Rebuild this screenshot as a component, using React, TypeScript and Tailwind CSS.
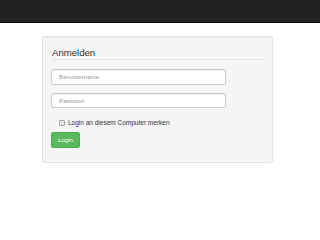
export default function App() {
  const font = { fontFamily: '"Liberation Sans", Arial, sans-serif' };
  return (
    <div className="w-[320px] h-[240px] bg-white overflow-hidden" style={font}>
      <div className="h-[23px] bg-[#222222] border-b border-[#080808]" />
      <div className="ml-[42px] mt-[13px] w-[231px] h-[127px] bg-[#f5f5f5] border border-[#e3e3e3] rounded-[2px] shadow-[inset_0_1px_1px_rgba(0,0,0,0.05)] pt-[10px] px-[8px] flex flex-col">
        <div className="h-[13px] text-[9.6px] leading-[12px] text-[#333333] border-b border-[#e5e5e5] pl-[1px]">
          Anmelden
        </div>
        <div className="mt-[9px] ml-[0px] w-[175px] h-[15.5px] bg-white border border-[#cccccc] rounded-[2px] shadow-[inset_0_1px_1px_rgba(0,0,0,0.075)] flex items-center pl-[7px] text-[6.2px] text-[#999999]">
          Benutzername
        </div>
        <div className="mt-[8px] w-[175px] h-[15.5px] bg-white border border-[#cccccc] rounded-[2px] shadow-[inset_0_1px_1px_rgba(0,0,0,0.075)] flex items-center pl-[7px] text-[6.2px] text-[#999999]">
          Passwort
        </div>
        <div className="mt-[11px] h-[7px] flex items-center pl-[8px]">
          <span className="w-[6px] h-[6px] border border-[#a0a0a0] rounded-[1px] bg-[#e8e8e8]" />
          <span className="ml-[3px] text-[6.5px] leading-[7px] text-[#333333]">
            Login an diesem Computer merken
          </span>
        </div>
        <div className="mt-[6px] w-[29px] h-[15.5px] bg-[#5cb85c] border border-[#4cae4c] rounded-[2px] flex items-center justify-center text-[6.1px] text-white">
          Login
        </div>
      </div>
    </div>
  );
}
